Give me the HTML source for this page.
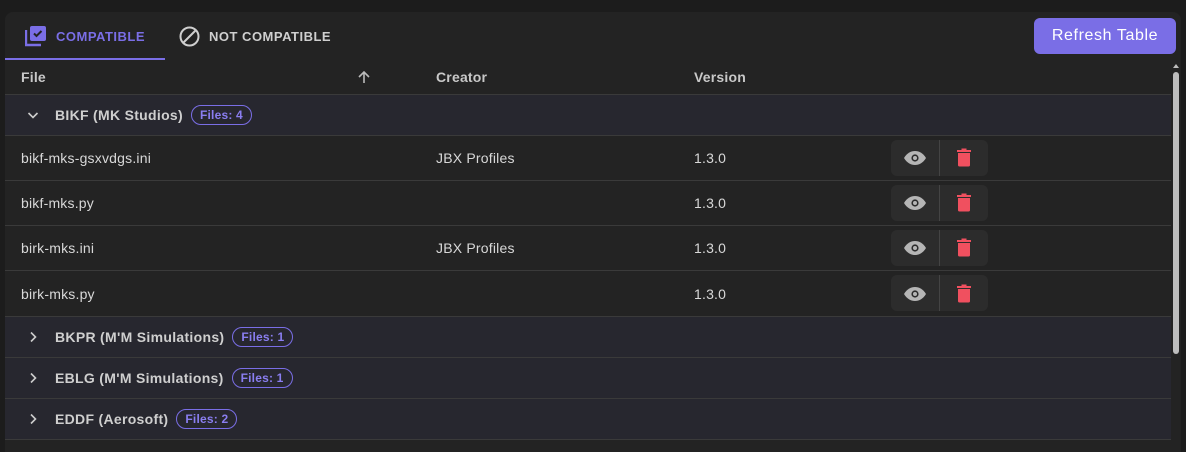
<!DOCTYPE html>
<html><head><style>
*{box-sizing:border-box;margin:0;padding:0}
body{width:1186px;height:442px;background:#1c1c1c;font-family:"Liberation Sans",sans-serif;position:relative;overflow:hidden;color:#d8d8d8}
.panel{position:absolute;left:5px;top:12px;width:1176px;height:440px;background:#232323;border-radius:8px 8px 0 0}
.tab{position:absolute;top:0;height:48px;display:flex;align-items:center;font-size:13px;font-weight:bold;letter-spacing:0.5px}
.btn{position:absolute;left:1034px;top:18px;width:142px;height:36px;background:#7a6ee6;border-radius:6px;color:#fff;font-size:16px;letter-spacing:0.6px;display:flex;align-items:center;justify-content:center}
.row{position:absolute;left:5px;width:1166px;border-bottom:1px solid #3a3a3a;font-size:14px;letter-spacing:0.2px}
.g{background:#27272f;height:41px}
.d{height:45px}
.t{position:absolute;top:0;height:100%;display:flex;align-items:center}
.gt{font-weight:bold;color:#cfcfcf;font-size:14px;letter-spacing:0.3px}
.badge{display:inline-block;border:1px solid #7a6ee6;color:#8a7ef0;border-radius:11px;font-size:12px;font-weight:bold;padding:2px 8px;margin-left:8px;letter-spacing:0.2px}
.act{position:absolute;left:886px;top:4px;width:97px;height:36px;background:#2c2c2c;border-radius:6px}
.act:after{content:"";position:absolute;left:48px;top:0;width:1px;height:36px;background:#444}
.sb{position:absolute;left:1173px;top:72px;width:6px;height:282px;background:#bdbdbd;border-radius:3px}
</style></head><body>
<div class="panel"></div>
<div class="tab" style="left:25px;top:12px;color:#7a6ee6">
<svg width="22" height="22" viewBox="0 0 22 22"><path d="M1 5v15h15" stroke="#7a6ee6" stroke-width="2.4" fill="none"/><rect x="5" y="1" width="16" height="15" rx="2" fill="#7a6ee6"/><path d="M9 8.5l2.5 2.5 5-5" stroke="#232323" stroke-width="2" fill="none"/></svg>
<span style="margin-left:9px">COMPATIBLE</span></div>
<div style="position:absolute;left:5px;top:58px;width:160px;height:2px;background:#7a6ee6"></div>
<div class="tab" style="left:179px;top:12px;color:#cfcfcf">
<svg width="21" height="21" viewBox="0 0 21 21"><circle cx="10.5" cy="10.5" r="9" stroke="#cfcfcf" stroke-width="2" fill="none"/><path d="M4.5 16.5l12-12" stroke="#cfcfcf" stroke-width="2"/></svg>
<span style="margin-left:9px">NOT COMPATIBLE</span></div>
<div class="btn">Refresh Table</div>
<div class="row" style="top:60px;height:35px;font-weight:bold;color:#c8c8c8">
<div class="t" style="left:16px">File</div>
<div class="t" style="left:352px"><svg width="14" height="14" viewBox="0 0 14 14"><path d="M7 13V2M2 7l5-5 5 5" stroke="#bbb" stroke-width="1.6" fill="none"/></svg></div>
<div class="t" style="left:431px">Creator</div>
<div class="t" style="left:689px">Version</div></div>
<div class="row g" style="top:95px"><div class="t" style="left:22px"><svg width="12" height="12" viewBox="0 0 12 12"><path d="M1.5 4l4.5 4.5L10.5 4" stroke="#ccc" stroke-width="1.6" fill="none"/></svg></div><div class="t gt" style="left:50px">BIKF (MK Studios)<span class="badge">Files: 4</span></div></div>
<div class="row d" style="top:136px"><div class="t" style="left:16px">bikf-mks-gsxvdgs.ini</div><div class="t" style="left:431px">JBX Profiles</div><div class="t" style="left:689px">1.3.0</div><div class="act"></div></div>
<div class="row d" style="top:181px"><div class="t" style="left:16px">bikf-mks.py</div><div class="t" style="left:689px">1.3.0</div><div class="act"></div></div>
<div class="row d" style="top:226px"><div class="t" style="left:16px">birk-mks.ini</div><div class="t" style="left:431px">JBX Profiles</div><div class="t" style="left:689px">1.3.0</div><div class="act"></div></div>
<div class="row d" style="top:271px;height:46px"><div class="t" style="left:16px">birk-mks.py</div><div class="t" style="left:689px">1.3.0</div><div class="act"></div></div>
<div class="row g" style="top:317px"><div class="t" style="left:22px"><svg width="12" height="12" viewBox="0 0 12 12"><path d="M4 1.5l4.5 4.5L4 10.5" stroke="#ccc" stroke-width="1.6" fill="none"/></svg></div><div class="t gt" style="left:50px">BKPR (M'M Simulations)<span class="badge">Files: 1</span></div></div>
<div class="row g" style="top:358px"><div class="t" style="left:22px"><svg width="12" height="12" viewBox="0 0 12 12"><path d="M4 1.5l4.5 4.5L4 10.5" stroke="#ccc" stroke-width="1.6" fill="none"/></svg></div><div class="t gt" style="left:50px">EBLG (M'M Simulations)<span class="badge">Files: 1</span></div></div>
<div class="row g" style="top:399px"><div class="t" style="left:22px"><svg width="12" height="12" viewBox="0 0 12 12"><path d="M4 1.5l4.5 4.5L4 10.5" stroke="#ccc" stroke-width="1.6" fill="none"/></svg></div><div class="t gt" style="left:50px">EDDF (Aerosoft)<span class="badge">Files: 2</span></div></div>
<svg style="position:absolute;left:0;top:0" width="1186" height="442">
<defs><g id="eye"><path d="M-11 0C-8-5-4-7 0-7S8-5 11 0C8 5 4 7 0 7S-8 5-11 0Z" fill="#b5b5b5"/><circle r="3.6" fill="#2c2c2c"/><circle r="2" fill="#b5b5b5"/></g>
<g id="bin"><rect x="-7" y="-8" width="14" height="2" fill="#f0505f"/><rect x="-2.5" y="-9.5" width="5" height="2" fill="#f0505f"/><path d="M-6-5H6V7Q6 8.5 4.5 8.5H-4.5Q-6 8.5-6 7Z" fill="#f0505f"/></g></defs>
<use href="#eye" x="915" y="158"/><use href="#bin" x="964" y="158"/>
<use href="#eye" x="915" y="203"/><use href="#bin" x="964" y="203"/>
<use href="#eye" x="915" y="248"/><use href="#bin" x="964" y="248"/>
<use href="#eye" x="915" y="294"/><use href="#bin" x="964" y="294"/>
<path d="M1173 68l3-4 3 4z" fill="#bdbdbd"/>
</svg>
<div class="sb"></div>
</body></html>
